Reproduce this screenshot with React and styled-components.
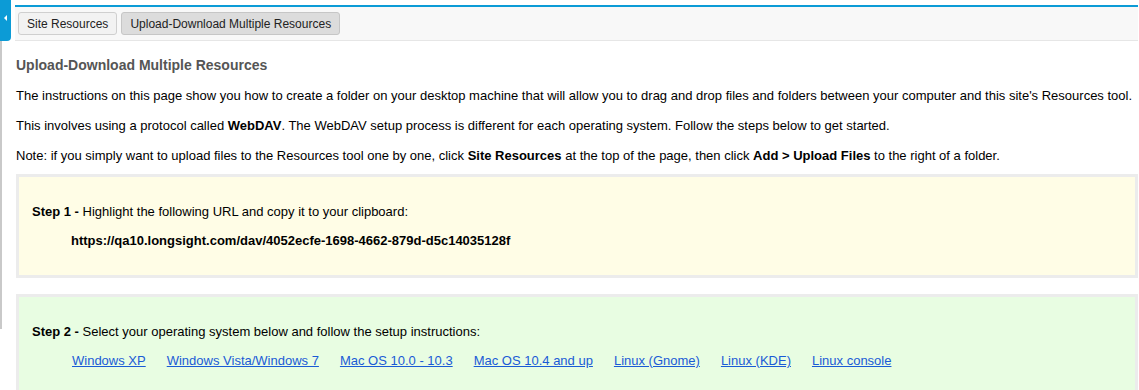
import React from 'react';
import styled, { createGlobalStyle } from 'styled-components';

const GlobalStyle = createGlobalStyle`
    body {
        margin: 0;
        background: #fff;
        font-family: "Liberation Sans", Arial, sans-serif;
        color: #000;
    }
`;

const Page = styled.div`
    display: flex;
    width: 1139px;
    height: 390px;
    overflow: hidden;
`;

const Side = styled.div`
    width: 15px;
    flex-shrink: 0;
    display: flex;
    flex-direction: column;
`;

const Tab = styled.div`
    width: 11px;
    height: 41px;
    background: #0c9bd6;
    border-bottom-right-radius: 4px;
    display: flex;
    align-items: center;
    padding-left: 4px;
    box-sizing: border-box;
    padding-bottom: 6px;
`;

const Arrow = styled.span`
    width: 0;
    height: 0;
    border-top: 3px solid transparent;
    border-bottom: 3px solid transparent;
    border-right: 3px solid #fff;
`;

const Rail = styled.div`
    width: 2px;
    height: 288px;
    background: #c9c9c9;
`;

const Main = styled.div`
    flex: 1;
    margin-right: 1px;
    padding-top: 5px;
`;

const Toolbar = styled.div`
    display: flex;
    align-items: center;
    gap: 4px;
    height: 33px;
    padding: 0 3px;
    background: #f8f8f8;
    border-top: 2px solid #0c9bd6;
    border-bottom: 1px solid #e6e6e6;
`;

const ToolButton = styled.button`
    height: 23px;
    padding: 0 8px;
    font-family: inherit;
    font-size: 12px;
    color: #222;
    background: ${p => (p.$active ? '#dcdcdc' : '#f2f2f2')};
    border: 1px solid ${p => (p.$active ? '#c6c6c6' : '#cfcfcf')};
    border-radius: 3px;
    cursor: pointer;
`;

const Content = styled.div`
    padding-left: 1px;
`;

const Intro = styled.div`
    display: flex;
    flex-direction: column;
    gap: 14px;
    padding-top: 15px;
`;

const Heading = styled.h2`
    margin: 0;
    font-size: 14px;
    line-height: 18px;
    font-weight: bold;
    color: #555;
`;

const Para = styled.p`
    margin: 0;
    font-size: 13px;
    line-height: 16px;
`;

const StepBox = styled.div`
    margin-top: ${p => p.$gap}px;
    padding: 27px 13px 26px;
    background: ${p => p.$bg};
    border: 3px solid #ececec;
    display: flex;
    flex-direction: column;
    gap: 13px;
`;

const StepLine = styled.div`
    font-size: 13px;
    line-height: 16px;
`;

const Url = styled.div`
    font-size: 13px;
    line-height: 16px;
    font-weight: bold;
    padding-left: 39px;
`;

const LinkRow = styled.div`
    display: flex;
    gap: 21px;
    padding-left: 40px;
    font-size: 13px;
    line-height: 16px;
`;

const OsLink = styled.a`
    color: #1a5bd6;
    text-decoration: underline;
`;

const osList = [
    'Windows XP',
    'Windows Vista/Windows 7',
    'Mac OS 10.0 - 10.3',
    'Mac OS 10.4 and up',
    'Linux (Gnome)',
    'Linux (KDE)',
    'Linux console',
];

export default function App() {
    return (
        <Page>
            <GlobalStyle />
            <Side>
                <Tab><Arrow /></Tab>
                <Rail />
            </Side>
            <Main>
                <Toolbar>
                    <ToolButton>Site Resources</ToolButton>
                    <ToolButton $active>Upload-Download Multiple Resources</ToolButton>
                </Toolbar>
                <Content>
                    <Intro>
                        <Heading>Upload-Download Multiple Resources</Heading>
                        <Para>
                            The instructions on this page show you how to create a folder on your desktop machine that will allow you to drag and drop files and folders between your computer and this site's Resources tool.
                        </Para>
                        <Para>
                            This involves using a protocol called <b>WebDAV</b>. The WebDAV setup process is different for each operating system. Follow the steps below to get started.
                        </Para>
                        <Para>
                            Note: if you simply want to upload files to the Resources tool one by one, click <b>Site Resources</b> at the top of the page, then click <b>Add &gt; Upload Files</b> to the right of a folder.
                        </Para>
                    </Intro>
                    <StepBox $bg="#fffde6" $gap={10}>
                        <StepLine><b>Step 1 -</b> Highlight the following URL and copy it to your clipboard:</StepLine>
                        <Url>https://qa10.longsight.com/dav/4052ecfe-1698-4662-879d-d5c14035128f</Url>
                    </StepBox>
                    <StepBox $bg="#e8fde2" $gap={16}>
                        <StepLine><b>Step 2 -</b> Select your operating system below and follow the setup instructions:</StepLine>
                        <LinkRow>
                            {osList.map(os => (
                                <OsLink key={os} href="#">{os}</OsLink>
                            ))}
                        </LinkRow>
                    </StepBox>
                </Content>
            </Main>
        </Page>
    );
}
